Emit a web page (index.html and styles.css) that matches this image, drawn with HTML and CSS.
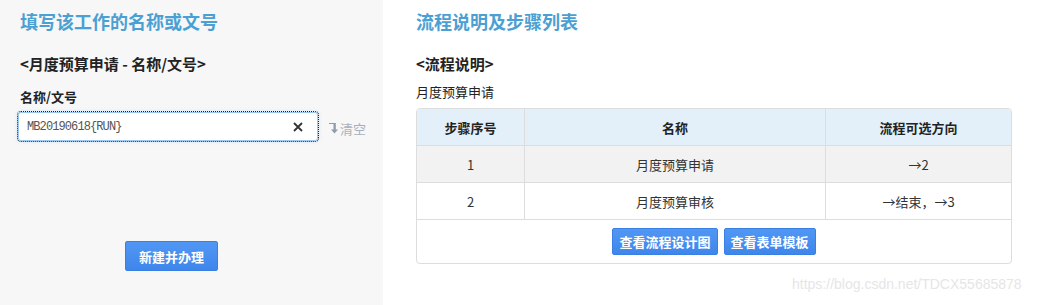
FILE: index.html
```html
<!DOCTYPE html>
<html lang="zh">
<head>
    <meta charset="UTF-8">
    <title>新建工作</title>
    <link rel="stylesheet" href="styles.css">
</head>
<body>

<div class="page">
    <div class="left">
        <h2 class="title">填写该工作的名称或文号</h2>
        <h3 class="sub">&lt;月度预算申请 - 名称/文号&gt;</h3>
        <div class="label">名称/文号</div>
        <div class="field-row">
            <div class="field">
                <span class="field-text">MB20190618{RUN}</span>
                <svg class="close" width="10" height="10" viewBox="0 0 10 10">
                    <path d="M1 1 L9 9 M9 1 L1 9" stroke="#333" stroke-width="1.8" fill="none"/>
                </svg>
            </div>
            <a class="clear">
                <svg width="9" height="11" viewBox="0 0 9 11">
                    <path d="M0 1 H4.5 V6.5 H2 L5.5 10.5 L9 6.5 H6.8 V-0.2 H0 Z" fill="#8f9cab"/>
                </svg>清空
            </a>
        </div>
        <div class="actions">
            <button class="btn btn-big">新建并办理</button>
        </div>
    </div>

    <div class="right">
        <h2 class="title">流程说明及步骤列表</h2>
        <h3 class="sub">&lt;流程说明&gt;</h3>
        <div class="desc">月度预算申请</div>
        <div class="table-box">
            <table class="steps">
                <thead>
                    <tr>
                        <th class="c1">步骤序号</th>
                        <th class="c2">名称</th>
                        <th class="c3">流程可选方向</th>
                    </tr>
                </thead>
                <tbody>
                    <tr class="odd">
                        <td>1</td>
                        <td>月度预算申请</td>
                        <td>→2</td>
                    </tr>
                    <tr>
                        <td>2</td>
                        <td>月度预算审核</td>
                        <td>→结束，→3</td>
                    </tr>
                </tbody>
            </table>
            <div class="table-foot">
                <button class="btn">查看流程设计图</button>
                <button class="btn">查看表单模板</button>
            </div>
        </div>
    </div>
</div>

<div class="watermark">https://blog.csdn.net/TDCX55685878</div>

</body>
</html>
```

FILE: styles.css
```css
body {
    margin: 0;
    font-family: "Noto Sans CJK SC", "Liberation Sans", sans-serif;
    color: #333;
    background: #fff;
}
.page {
    display: flex;
    height: 305px;
}
.left {
    width: 363px;
    padding: 0 0 0 20px;
    background: #f7f7f8;
}
.right {
    flex: 1;
    padding-left: 33px;
}
.title {
    margin: 9px 0 0 0;
    font-size: 18px;
    line-height: 24px;
    font-weight: bold;
    color: #4ba0d3;
}
.sub {
    margin: 21px 0 0 0;
    font-size: 15px;
    line-height: 20px;
    font-weight: bold;
    color: #222;
}
.label {
    margin-top: 14px;
    font-size: 13px;
    line-height: 18px;
    font-weight: bold;
    color: #222;
}
.field-row {
    display: flex;
    align-items: center;
    margin-top: 6px;
    margin-left: -2px;
}
.field {
    box-sizing: border-box;
    width: 300px;
    height: 29px;
    display: flex;
    align-items: center;
    justify-content: space-between;
    padding: 0 14px 0 8px;
    background: #fff;
    border: 1px solid #9cc9ef;
    border-radius: 3px;
    outline: 1px dotted #222;
    box-shadow: 0 0 4px rgba(102, 175, 233, 0.35);
}
.field-text {
    font-family: "Liberation Mono", monospace;
    font-size: 12px;
    letter-spacing: -0.9px;
    color: #555;
}
.close {
    display: block;
}
.clear {
    display: flex;
    align-items: center;
    gap: 2px;
    margin: 4px 0 0 11px;
    font-size: 13px;
    color: #a7b0bb;
}
.actions {
    margin: 100px 0 0 105px;
}
.btn {
    height: 27px;
    padding: 0 6px;
    font-family: "Noto Sans CJK SC", sans-serif;
    font-size: 13px;
    font-weight: bold;
    color: #fff;
    background: linear-gradient(#5097f4, #3f86ec);
    border: 1px solid #3a7fe4;
    border-radius: 2px;
    cursor: pointer;
}
.btn-big {
    width: 93px;
    height: 30px;
}
.desc {
    margin-top: 9px;
    font-size: 13px;
    line-height: 18px;
    color: #222;
}
.table-box {
    width: 594px;
    margin-top: 7px;
    border: 1px solid #dddddd;
    border-radius: 4px;
    overflow: hidden;
}
.steps {
    width: 100%;
    border-collapse: collapse;
    font-size: 13px;
}
.steps th,
.steps td {
    height: 36px;
    padding: 0;
    text-align: center;
    border-bottom: 1px solid #dddddd;
    border-right: 1px solid #dddddd;
}
.steps th:last-child,
.steps td:last-child {
    border-right: none;
}
.steps th {
    font-weight: bold;
    color: #222;
    background: #e3f0f9;
}
.steps .c1 { width: 107px; }
.steps .c2 { width: 300px; }
.steps tr.odd td {
    background: #f2f2f2;
}
.table-foot {
    display: flex;
    justify-content: center;
    gap: 6px;
    padding: 8px 0 8px;
}
.watermark {
    position: absolute;
    left: 792px;
    top: 276px;
    font-family: "Liberation Sans", sans-serif;
    font-size: 14px;
    color: #e6e6e6;
}
```
